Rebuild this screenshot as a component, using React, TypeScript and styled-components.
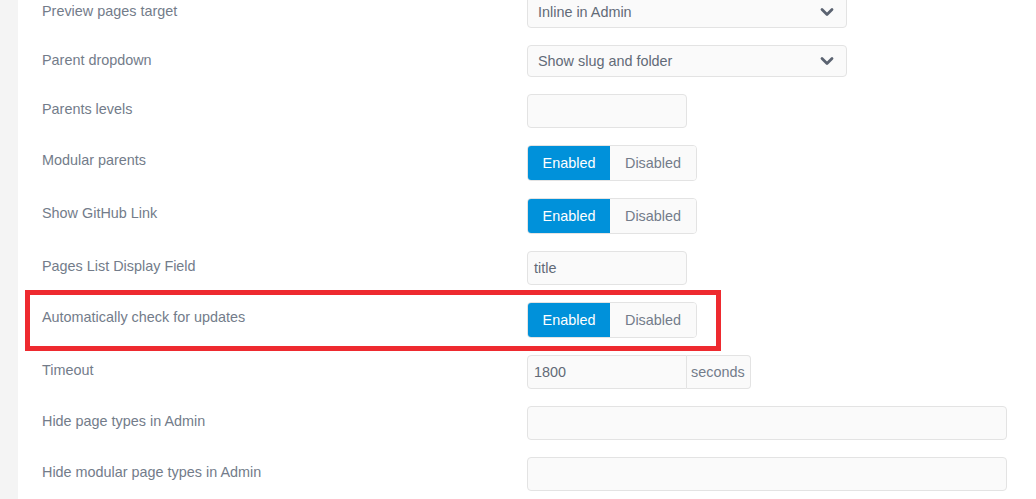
import styled, { createGlobalStyle } from 'styled-components';

const GlobalStyle = createGlobalStyle`
	html, body {
		margin: 0;
		padding: 0;
		background: #ffffff;
		font-family: "Liberation Sans", Arial, sans-serif;
		overflow: hidden;
	}
	* {
		box-sizing: border-box;
	}
`;

const Page = styled.div`
	display: flex;
	width: 1036px;
	height: 499px;
	overflow: hidden;
	background: #f4f4f4;
`;

const Panel = styled.div`
	flex: 1;
	margin-left: 18px;
	background: #ffffff;
	padding: 0 24px 0 24px;
	margin-top: -4px;
	display: flex;
	flex-direction: column;
	gap: 17px;
`;

const Row = styled.div`
	position: relative;
	display: grid;
	grid-template-columns: 485px 1fr;
	align-items: start;
`;

const Label = styled.label`
	padding-top: 7px;
	font-size: 14.4px;
	line-height: 16px;
	color: #737c8a;
`;

const Highlight = styled.div`
	position: absolute;
	left: -17px;
	top: -12px;
	width: 696px;
	height: 61px;
	border: 5px solid #ee2a2f;
	pointer-events: none;
`;

const SelectBox = styled.div`
	display: flex;
	align-items: center;
	justify-content: space-between;
	width: 320px;
	height: 32px;
	padding: 0 12px 0 10px;
	background: #fafafa;
	border: 1px solid #e3e3e3;
	border-radius: 4px;
	font-size: 14.4px;
	color: #626a77;
`;

const Input = styled.div<{ $wide?: boolean; $joined?: boolean }>`
	display: flex;
	align-items: center;
	width: ${(p) => (p.$wide ? '480px' : '160px')};
	height: 34px;
	padding: 0 6px;
	background: #fafafa;
	border: 1px solid #e3e3e3;
	border-radius: ${(p) => (p.$joined ? '4px 0 0 4px' : '4px')};
	font-size: 14.4px;
	color: #626a77;
`;

const Group = styled.div`
	display: flex;
`;

const Addon = styled.div`
	display: flex;
	align-items: center;
	height: 34px;
	padding: 0 5px 0 4px;
	background: #fafafa;
	border: 1px solid #e3e3e3;
	border-left: none;
	border-radius: 0 4px 4px 0;
	font-size: 14.4px;
	color: #737c8a;
`;

const Toggle = styled.div`
	display: flex;
	width: 170px;
	height: 36px;
	border: 1px solid #e3e3e3;
	border-radius: 4px;
	overflow: hidden;
	background: #fafafa;
`;

const ToggleButton = styled.div<{ $active?: boolean }>`
	display: flex;
	align-items: center;
	justify-content: center;
	flex: ${(p) => (p.$active ? '0 0 82px' : '1')};
	font-size: 14.4px;
	background: ${(p) => (p.$active ? '#0091da' : '#fafafa')};
	color: ${(p) => (p.$active ? '#ffffff' : '#737c8a')};
`;

const Chevron = () => (
	<svg width="14" height="10" viewBox="0 0 14 10">
		<path
			d="M2 2.5 L7 7.5 L12 2.5"
			fill="none"
			stroke="#5b6371"
			strokeWidth="2.8"
			strokeLinecap="round"
			strokeLinejoin="round"
		/>
	</svg>
);

function Switch() {
	return (
		<Toggle>
			<ToggleButton $active>Enabled</ToggleButton>
			<ToggleButton>Disabled</ToggleButton>
		</Toggle>
	);
}

export default function App(): JSX.Element {
	return (
		<Page>
			<GlobalStyle />
			<Panel>
				<Row>
					<Label>Preview pages target</Label>
					<SelectBox>
						Inline in Admin
						<Chevron />
					</SelectBox>
				</Row>
				<Row>
					<Label>Parent dropdown</Label>
					<SelectBox>
						Show slug and folder
						<Chevron />
					</SelectBox>
				</Row>
				<Row>
					<Label>Parents levels</Label>
					<Input />
				</Row>
				<Row>
					<Label>Modular parents</Label>
					<Switch />
				</Row>
				<Row>
					<Label>Show GitHub Link</Label>
					<Switch />
				</Row>
				<Row>
					<Label>Pages List Display Field</Label>
					<Input>title</Input>
				</Row>
				<Row>
					<Highlight />
					<Label>Automatically check for updates</Label>
					<Switch />
				</Row>
				<Row>
					<Label>Timeout</Label>
					<Group>
						<Input $joined>1800</Input>
						<Addon>seconds</Addon>
					</Group>
				</Row>
				<Row>
					<Label>Hide page types in Admin</Label>
					<Input $wide />
				</Row>
				<Row>
					<Label>Hide modular page types in Admin</Label>
					<Input $wide />
				</Row>
			</Panel>
		</Page>
	);
}
